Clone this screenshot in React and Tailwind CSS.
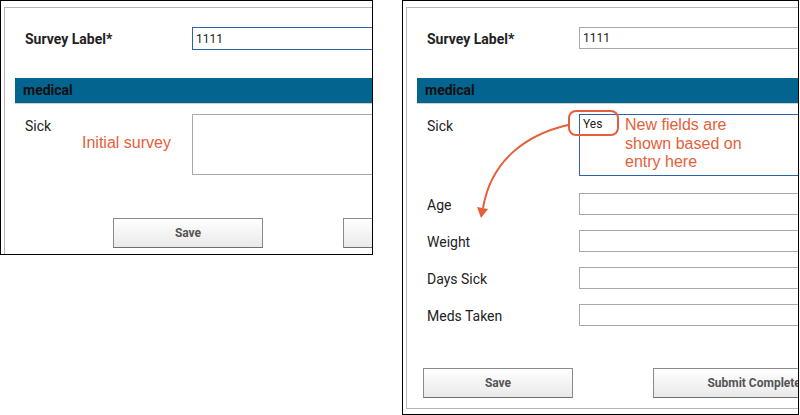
import React from "react";

const ORANGE = "#e5603a";

const Field = ({ label, labelW, h = "h-[22px]", focused = false, value = "", mt = "mt-[15px]", multi = false }) => (
  <div className={`flex flex-row items-start ${mt}`}>
    <div
      className="shrink-0 pl-[20px] pt-[3px] text-[14px] leading-[18px] text-[#222]"
      style={{ width: labelW }}
    >
      {label}
    </div>
    <div
      className={`w-[420px] ${h} border ${
        focused ? "border-[#2a63ad]" : "border-[#a9a9a9]"
      } bg-white px-[3px] text-[12px] text-[#222] ${
        multi ? "pt-[1px] leading-[16px]" : "flex items-center"
      }`}
    >
      {value}
    </div>
  </div>
);

const Btn = ({ label, w }) => (
  <div
    className="h-[30px] shrink-0 flex items-center justify-center border border-[#8c8c8c] border-b-[#6f6f6f] bg-gradient-to-b from-white to-[#e9e9e9] text-[12px] font-bold text-[#555] whitespace-nowrap"
    style={{ width: w }}
  >
    {label}
  </div>
);

const Header = ({ mt }) => (
  <div
    className={`${mt} mx-[10px] h-[26px] bg-[#03648f] border-b border-[#cfcfcf] flex items-center pl-[8px] text-[14px] font-bold text-[#111]`}
  >
    medical
  </div>
);

export default function App() {
  return (
    <div
      className="w-[800px] h-[415px] bg-white flex flex-row items-start"
      style={{ fontFamily: "Roboto, 'Liberation Sans', sans-serif" }}
    >
      {/* left: initial survey */}
      <div className="relative w-[373px] h-[255px] shrink-0 border border-black overflow-hidden">
        <div className="ml-[3px] mt-[6px] w-[700px] h-[400px] border-l border-t border-[#b5b5b5]">
          <Field label={<b className="text-[14px]">Survey Label*</b>} labelW="187px" focused value="1111" mt="mt-[19px]" h="h-[23px]" />
          <Header mt="mt-[28px]" />
          <Field label="Sick" labelW="187px" h="h-[61px]" mt="mt-[10px]" multi />
          <div className="mt-[43px] flex flex-row pl-[108px] gap-[80px]">
            <Btn label="Save" w="150px" />
            <Btn label="Submit Completed Form" w="240px" />
          </div>
        </div>
        <div
          className="absolute left-[81px] top-[133px] text-[16px] leading-[18px]"
          style={{ color: ORANGE, fontFamily: "'Liberation Sans', Arial, sans-serif" }}
        >
          Initial survey
        </div>
      </div>

      {/* right: fields shown after entry */}
      <div className="relative ml-[29px] w-[397px] h-[415px] shrink-0 border border-black overflow-hidden">
        <div className="ml-[3px] mt-[6px] w-[700px] h-[402px] border-l border-t border-b border-[#b5b5b5]">
          <Field label={<b className="text-[14px]">Survey Label*</b>} labelW="172px" value="1111" mt="mt-[19px]" />
          <Header mt="mt-[29px]" />
          <Field label="Sick" labelW="172px" h="h-[62px]" focused value="Yes" mt="mt-[10px]" multi />
          <Field label="Age" labelW="172px" mt="mt-[17px]" />
          <Field label="Weight" labelW="172px" />
          <Field label="Days Sick" labelW="172px" />
          <Field label="Meds Taken" labelW="172px" />
          <div className="mt-[42px] flex flex-row pl-[16px] gap-[80px]">
            <Btn label="Save" w="150px" />
            <Btn label="Submit Completed Form" w="240px" />
          </div>
        </div>

        {/* annotation */}
        <div className="absolute left-[165px] top-[109px] w-[51px] h-[26px] rounded-[8px] border-2" style={{ borderColor: ORANGE }} />
        <div
          className="absolute left-[222px] top-[115px] text-[16px] leading-[18.5px]"
          style={{ color: ORANGE, fontFamily: "'Liberation Sans', Arial, sans-serif" }}
        >
          New fields are
          <br />
          shown based on
          <br />
          entry here
        </div>
        <svg className="absolute left-0 top-0" width="397" height="415" viewBox="0 0 397 415">
          <path d="M165,124 C122,134 88,160 80,207" fill="none" stroke={ORANGE} strokeWidth="2" />
          <polygon points="78,217 74,206 85,208" fill={ORANGE} />
        </svg>
      </div>
    </div>
  );
}
